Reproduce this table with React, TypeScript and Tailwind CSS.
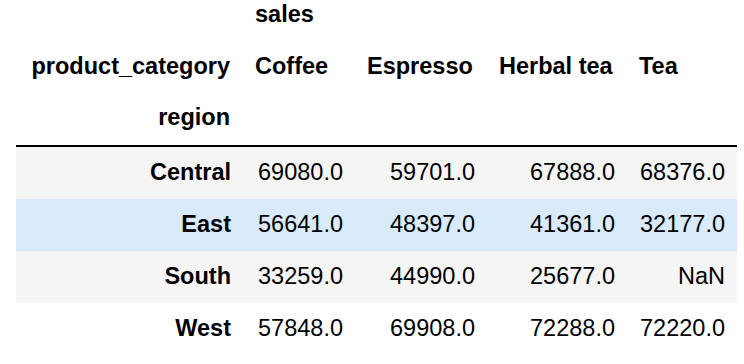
import React from "react";

type Row = { region: string; values: string[]; bg: string };

const rows: Row[] = [
  { region: "Central", values: ["69080.0", "59701.0", "67888.0", "68376.0"], bg: "bg-[#f5f5f5]" },
  { region: "East", values: ["56641.0", "48397.0", "41361.0", "32177.0"], bg: "bg-[#d9eafb]" },
  { region: "South", values: ["33259.0", "44990.0", "25677.0", "NaN"], bg: "bg-[#f5f5f5]" },
  { region: "West", values: ["57848.0", "69908.0", "72288.0", "72220.0"], bg: "bg-white" },
];

const categories = ["Coffee", "Espresso", "Herbal tea", "Tea"];
const widths = ["w-[112px]", "w-[132px]", "w-[140px]", "w-[110px]"];

const App: React.FC = () => {
  return (
    <div className="w-[744px] h-[364px] overflow-hidden bg-white pl-4 font-['Liberation_Sans',Arial,sans-serif] text-[23.5px] leading-none text-black">
      <table className="-mt-[11px] border-separate border-spacing-0 table-fixed w-[721px]">
        <colgroup>
          <col className="w-[227px]" />
          {widths.map((w) => (
            <col key={w} className={w} />
          ))}
        </colgroup>
        <thead>
          {/* column level 0 */}
          <tr>
            <th className="h-[52px] px-3 text-right font-bold"></th>
            <th colSpan={4} className="h-[52px] px-3 text-left font-bold">
              sales
            </th>
          </tr>
          {/* column level 1 */}
          <tr>
            <th className="h-[52px] pl-3 pr-[13px] text-right font-bold">product_category</th>
            {categories.map((c) => (
              <th key={c} className="h-[52px] px-3 text-left font-bold whitespace-nowrap">
                {c}
              </th>
            ))}
          </tr>
          {/* index name */}
          <tr>
            <th className="h-[54px] pl-3 pr-[13px] pb-[2px] text-right font-bold border-b-2 border-black">region</th>
            {categories.map((c) => (
              <th key={c} className="h-[54px] px-3 border-b-2 border-black"></th>
            ))}
          </tr>
        </thead>
        <tbody>
          {rows.map((r) => (
            <tr key={r.region} className={r.bg}>
              <th className="h-[52px] pl-3 pr-[12px] text-right font-bold">{r.region}</th>
              {r.values.map((v, i) => (
                <td key={i} className="h-[52px] px-3 text-right font-normal">
                  {v}
                </td>
              ))}
            </tr>
          ))}
        </tbody>
      </table>
    </div>
  );
};

export default App;
